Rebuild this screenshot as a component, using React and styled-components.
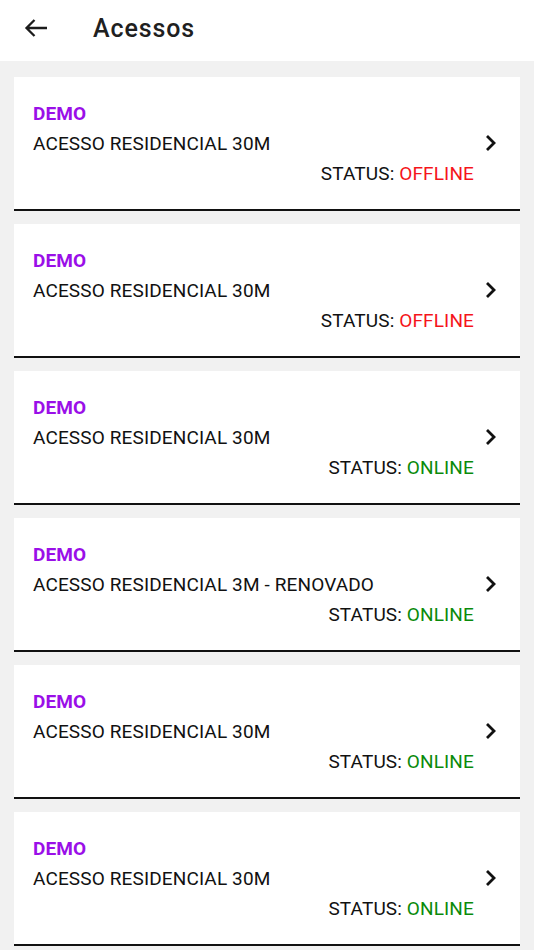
import React from 'react'
import styled, { createGlobalStyle } from 'styled-components'

const GlobalStyle = createGlobalStyle`
  body {
    margin: 0;
    background: #f1f1f1;
    font-family: Roboto, "Liberation Sans", sans-serif;
  }
`

const Page = styled.div`
  width: 534px;
  min-height: 950px;
  background: #f1f1f1;
`

const Header = styled.header`
  height: 61px;
  background: #fff;
  display: flex;
  align-items: center;
  padding-left: 22px;
  box-sizing: border-box;
`

const BackButton = styled.button`
  border: none;
  background: none;
  padding: 0;
  width: 28px;
  height: 28px;
  display: flex;
  align-items: center;
  justify-content: center;
  cursor: pointer;
  margin-right: 43px;
  margin-top: -6px;
`

const Title = styled.h1`
  margin: 0;
  margin-top: -5px;
  font-size: 25px;
  letter-spacing: 0.9px;
  font-weight: 500;
  color: #202020;
`

const List = styled.div`
  display: flex;
  flex-direction: column;
  gap: 13px;
  padding: 16px 14px 0;
`

const Card = styled.div`
  background: #fff;
  border-bottom: 2px solid #111;
  height: 134px;
  padding: 27px 19px 0;
  box-sizing: border-box;
  display: flex;
  position: relative;
`

const Info = styled.div`
  flex: 1;
  display: flex;
  flex-direction: column;
  font-size: 19px;
  line-height: 20px;
  letter-spacing: 0.13px;
`

const Brand = styled.div`
  color: #9a0fe8;
  font-weight: 700;
`

const Plan = styled.div`
  color: #111;
  margin-top: 10px;
`

const Status = styled.div`
  align-self: flex-end;
  margin-top: 10px;
  margin-right: 27px;
  color: #111;
`

const StatusValue = styled.span`
  color: ${p => (p.$online ? '#0a8a0a' : '#f5141b')};
`

const Chevron = styled.svg`
  position: absolute;
  right: 22px;
  top: 57px;
`

const items = [
  { plan: 'ACESSO RESIDENCIAL 30M', online: false },
  { plan: 'ACESSO RESIDENCIAL 30M', online: false },
  { plan: 'ACESSO RESIDENCIAL 30M', online: true },
  { plan: 'ACESSO RESIDENCIAL 3M - RENOVADO', online: true },
  { plan: 'ACESSO RESIDENCIAL 30M', online: true },
  { plan: 'ACESSO RESIDENCIAL 30M', online: true },
]

export default function App() {
  return (
    <Page>
      <GlobalStyle />
      <Header>
        <BackButton aria-label="Voltar">
          <svg width="24" height="20" viewBox="0 0 24 20" fill="none">
            <path d="M23 10H3M10.5 2L2.5 10l8 8" stroke="#1c1c1c" strokeWidth="2.3" strokeLinecap="butt" />
          </svg>
        </BackButton>
        <Title>Acessos</Title>
      </Header>
      <List>
        {items.map((it, i) => (
          <Card key={i}>
            <Info>
              <Brand>DEMO</Brand>
              <Plan>{it.plan}</Plan>
              <Status>
                STATUS: <StatusValue $online={it.online}>{it.online ? 'ONLINE' : 'OFFLINE'}</StatusValue>
              </Status>
            </Info>
            <Chevron width="14" height="18" viewBox="0 0 14 18" fill="none">
              <path d="M3 2l7 7-7 7" stroke="#111" strokeWidth="2.8" />
            </Chevron>
          </Card>
        ))}
      </List>
    </Page>
  )
}
